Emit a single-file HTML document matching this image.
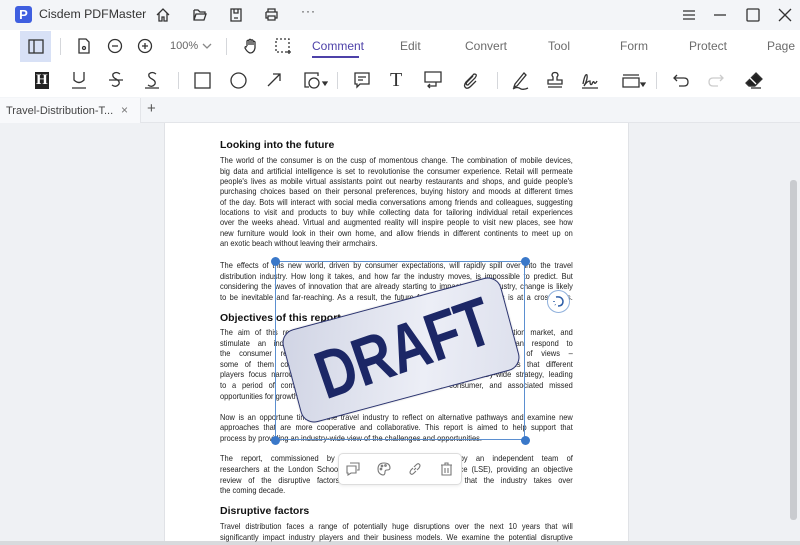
<!DOCTYPE html>
<html><head><meta charset="utf-8"><style>
*{margin:0;padding:0;box-sizing:border-box}
body{width:800px;height:545px;overflow:hidden;background:#eff1f4;font-family:"Liberation Sans",sans-serif;position:relative}
.a{position:absolute}
svg.i{position:absolute;fill:none;stroke:#333;stroke-width:1.3}
.tab{position:absolute;top:39px;font-size:12px;color:#6b6b6b}
.ln{position:absolute;left:220px;width:392px;font-size:8.3px;color:#222;white-space:nowrap;text-align:justify;text-align-last:justify;line-height:10px;height:10px;transform:scaleX(0.9);transform-origin:0 0}
.ln.l{text-align-last:left}
.h{position:absolute;left:220px;font-size:10.5px;font-weight:bold;color:#111}
.sep{position:absolute;width:1px;background:#d5d7db}
.hd{position:absolute;width:9px;height:9px;border-radius:50%;background:#3a78c9}
</style></head><body>
<div class="a" style="left:0;top:0;width:800px;height:30px;background:#f3f5f8"></div>
<div class="a" style="left:15px;top:6px;width:17px;height:17px;border-radius:3px;background:#3f5fe0;color:#fff;font-weight:bold;font-size:13px;text-align:center;line-height:17px">P</div>
<div class="a" style="left:39px;top:7px;font-size:12.3px;color:#333">Cisdem PDFMaster</div>
<svg class="i" style="left:155px;top:7px" width="16" height="16"><path d="M2 8 L8 2 L14 8 M4 6 V14 H7 V10 H9 V14 H12 V6"/></svg>
<svg class="i" style="left:192px;top:8px" width="16" height="14"><path d="M2 2 H6 L8 4 H13 V6 M2 2 V12 H12 L14 6 H4 L2 12"/></svg>
<svg class="i" style="left:229px;top:7px" width="14" height="16"><path d="M2 2 H12 V14 H2 Z M5 2 V6 H9 V2 M5 11 H9"/></svg>
<svg class="i" style="left:264px;top:7px" width="15" height="15"><path d="M4 5 V2 H11 V5 M2 5 H13 V11 H11 M4 11 H2 V5 M4 9 H11 V13 H4 Z"/></svg>
<div class="a" style="left:301px;top:4px;font-size:12px;color:#333;letter-spacing:1px">···</div>
<svg class="i" style="left:682px;top:8px" width="14" height="14"><path d="M1 3 H13 M1 7 H13 M1 11 H13"/></svg>
<svg class="i" style="left:713px;top:8px" width="14" height="14"><path d="M1 7 H13"/></svg>
<svg class="i" style="left:746px;top:8px" width="14" height="14"><rect x="1" y="1" width="12" height="12" rx="1"/></svg>
<svg class="i" style="left:778px;top:8px" width="14" height="14"><path d="M1 1 L13 13 M13 1 L1 13"/></svg>
<div class="a" style="left:0;top:30px;width:800px;height:67px;background:#fff"></div>
<div class="a" style="left:20px;top:31px;width:31px;height:31px;background:#d8e1f6"></div>
<svg class="i" style="left:28px;top:39px" width="16" height="15"><rect x="1" y="1" width="14" height="13"/><path d="M6 1 V14"/></svg>
<div class="sep" style="left:60px;top:38px;height:17px"></div>
<svg class="i" style="left:78px;top:38px" width="12" height="16"><path d="M1 1 H8 L11 4 V15 H1 Z"/><circle cx="6" cy="10" r="1.5"/></svg>
<svg class="i" style="left:107px;top:38px" width="16" height="16"><circle cx="8" cy="8" r="6.5"/><path d="M5 8 H11"/></svg>
<svg class="i" style="left:137px;top:38px" width="16" height="16"><circle cx="8" cy="8" r="6.5"/><path d="M5 8 H11 M8 5 V11"/></svg>
<div class="a" style="left:170px;top:40px;font-size:11px;color:#666">100%</div>
<svg class="i" style="left:202px;top:42px;stroke:#888" width="10" height="8"><path d="M1 2 L5 6 L9 2"/></svg>
<div class="sep" style="left:226px;top:38px;height:17px"></div>
<svg class="i" style="left:243px;top:37px" width="17" height="18"><path d="M4 9 V4 Q5 2.5 6 4 V8 V3 Q7 1.5 8 3 V8 V3.5 Q9 2 10 3.5 V8 V5 Q11 3.5 12 5 V11 Q11 16 7 16 Q4 15 2 11 Q2 9 4 10"/></svg>
<svg class="i" style="left:275px;top:38px" width="17" height="17"><rect x="1" y="1" width="13" height="13" stroke-dasharray="2 2"/><path d="M14 12 V16 M12 14 H16"/></svg>
<div class="tab" style="left:312px;color:#4d41a8">Comment</div>
<div class="a" style="left:312px;top:56px;width:47px;height:2px;background:#4d41a8"></div>
<div class="tab" style="left:400px">Edit</div>
<div class="tab" style="left:465px">Convert</div>
<div class="tab" style="left:548px">Tool</div>
<div class="tab" style="left:620px">Form</div>
<div class="tab" style="left:689px">Protect</div>
<div class="tab" style="left:767px">Page</div>
<div class="a" style="left:35px;top:72px;width:14px;height:17px;background:#222"></div>
<div class="a" style="left:36px;top:72px;font-size:15px;font-weight:bold;color:#fff;font-family:'Liberation Serif',serif">H</div>
<svg class="i" style="left:71px;top:71px" width="16" height="19"><path d="M3 1 V9 Q8 14 13 9 V1 M1 17 H15"/></svg>
<svg class="i" style="left:108px;top:71px" width="16" height="19"><path d="M12 3 Q8 0 5 3 Q4 6 8 8 Q12 10 11 13 Q8 17 4 14 M1 9 H15"/></svg>
<svg class="i" style="left:144px;top:71px" width="16" height="19"><path d="M12 3 Q8 0 5 3 Q4 6 8 8 Q12 10 11 13 Q8 17 4 14 M1 17 H15"/></svg>
<div class="sep" style="left:178px;top:72px;height:17px"></div>
<svg class="i" style="left:194px;top:72px" width="17" height="17"><rect x="1" y="1" width="15" height="15"/></svg>
<svg class="i" style="left:230px;top:72px" width="17" height="17"><circle cx="8.5" cy="8.5" r="7.5"/></svg>
<svg class="i" style="left:266px;top:72px" width="16" height="16"><path d="M2 14 L14 2 M7 2 H14 V9"/></svg>
<svg class="i" style="left:304px;top:72px" width="24" height="17"><path d="M14 4 V1 H1 V15 H5"/><circle cx="10" cy="11" r="5"/><path d="M19 10 H23 L21 13 Z" fill="#333"/></svg>
<div class="sep" style="left:337px;top:72px;height:17px"></div>
<svg class="i" style="left:354px;top:72px" width="17" height="17"><path d="M1 1 H15 V12 H6 L3 15 V12 H1 Z M4 5 H12 M4 8 H9"/></svg>
<div class="a" style="left:390px;top:69px;font-size:20px;color:#333;font-family:'Liberation Serif',serif">T</div>
<svg class="i" style="left:424px;top:71px" width="19" height="18"><path d="M1 1 H17 V11 H1 Z M10 15 H4 M6 13 L4 15 L6 17 M12 11 V15 H10"/></svg>
<svg class="i" style="left:462px;top:72px" width="17" height="17"><path d="M11 4 L5 10 Q3 13 6 13 L13 6 Q16 2 12 2 L4 10 Q1 14 4 16 Q6 17 9 14 L14 9"/></svg>
<div class="sep" style="left:497px;top:72px;height:17px"></div>
<svg class="i" style="left:511px;top:71px" width="19" height="19"><path d="M4 13 L13 2 L15 4 L6 15 L3 16 Z M2 18 Q6 15 10 18 Q13 19 17 17"/></svg>
<svg class="i" style="left:546px;top:71px" width="18" height="19"><path d="M7 9 V6 Q5 4 7 2 Q9 1 11 2 Q13 4 11 6 V9 H16 V13 H2 V9 Z M2 16 H16"/></svg>
<svg class="i" style="left:581px;top:71px" width="19" height="19"><path d="M2 13 Q4 2 6 4 Q7 8 3 15 Q6 10 9 10 Q9 15 11 13 Q12 10 13 11 Q14 14 16 10 M1 17 H17"/></svg>
<svg class="i" style="left:622px;top:72px" width="24" height="17"><path d="M1 3 H17 M1 6 H17 V15 H1 Z"/><path d="M19 11 H23 L21 14 Z" fill="#333"/></svg>
<div class="sep" style="left:656px;top:72px;height:17px"></div>
<svg class="i" style="left:672px;top:73px" width="18" height="15"><path d="M5 2 L2 5 L5 8 M2 5 H12 Q16 5 16 9 Q16 13 12 13 H7"/></svg>
<svg class="i" style="left:707px;top:73px;stroke:#ccc" width="18" height="15"><path d="M13 2 L16 5 L13 8 M16 5 H6 Q2 5 2 9 Q2 13 6 13 H11"/></svg>
<svg class="i" style="left:745px;top:71px" width="19" height="18"><path d="M11 2 L17 8 L10 15 L4 15 L1 12 Z" fill="#222"/><path d="M5 7 L11 13" stroke="#fff"/><path d="M1 12 L4 15 H10" stroke="#333"/><path d="M6 17 H16"/></svg>
<div class="a" style="left:0;top:97px;width:800px;height:26px;background:#f3f5f8;border-bottom:1px solid #e3e5e9"></div>
<div class="a" style="left:0;top:98px;width:141px;height:25px;background:#f8f9fb;border-right:1px solid #e3e5e9"></div>
<div class="a" style="left:6px;top:105px;font-size:11px;color:#444">Travel-Distribution-T...</div>
<div class="a" style="left:121px;top:103px;font-size:12px;color:#777">×</div>
<div class="a" style="left:147px;top:100px;font-size:15px;color:#555">+</div>
<div class="a" style="left:164px;top:123px;width:465px;height:418px;background:#fff;border-left:1px solid #e0e2e6;border-right:1px solid #e0e2e6"></div>
<div class="a" style="left:0;top:541px;width:800px;height:4px;background:#d8dadd"></div>
<div class="a" style="left:790px;top:180px;width:7px;height:340px;border-radius:3px;background:#c9cbcf"></div>

<div class="h" style="top:139px">Looking into the future</div>
<div class="ln" style="top:155px">The world of the consumer is on the cusp of momentous change. The combination of mobile devices,</div>
<div class="ln" style="top:165.5px">big data and artificial intelligence is set to revolutionise the consumer experience. Retail will permeate</div>
<div class="ln" style="top:176px">people's lives as mobile virtual assistants point out nearby restaurants and shops, and guide people's</div>
<div class="ln" style="top:186px">purchasing choices based on their personal preferences, buying history and moods at different times</div>
<div class="ln" style="top:196.5px">of the day. Bots will interact with social media conversations among friends and colleagues, suggesting</div>
<div class="ln" style="top:207px">locations to visit and products to buy while collecting data for tailoring individual retail experiences</div>
<div class="ln" style="top:217px">over the weeks ahead. Virtual and augmented reality will inspire people to visit new places, see how</div>
<div class="ln" style="top:227.5px">new furniture would look in their own home, and allow friends in different continents to meet up on</div>
<div class="ln l" style="top:238px">an exotic beach without leaving their armchairs.</div>

<div class="ln" style="top:260px">The effects of this new world, driven by consumer expectations, will rapidly spill over into the travel</div>
<div class="ln" style="top:270.5px">distribution industry. How long it takes, and how far the industry moves, is impossible to predict. But</div>
<div class="ln" style="top:281px">considering the waves of innovation that are already starting to impact on the industry, change is likely</div>
<div class="ln" style="top:291.5px">to be inevitable and far-reaching. As a result, the future for many industry players is at a crossroads.</div>

<div class="h" style="top:312px">Objectives of this report</div>
<div class="ln" style="top:327px">The aim of this report is to examine the disruptive forces in the travel distribution market, and</div>
<div class="ln" style="top:337.5px">stimulate an industry-wide debate about the new business models that can respond to</div>
<div class="ln" style="top:348px">the consumer revolution. Contributors to this report have a wide range of views –</div>
<div class="ln" style="top:358.5px">some of them conflicting – about how the industry will respond. The risk is that different</div>
<div class="ln" style="top:369px">players focus narrowly on their own piece of the chain without an industry-wide strategy, leading</div>
<div class="ln" style="top:380px">to a period of competitive disruption and confusion for the consumer, and associated missed</div>
<div class="ln l" style="top:390.5px">opportunities for growth.</div>

<div class="ln" style="top:411.5px">Now is an opportune time for the travel industry to reflect on alternative pathways and examine new</div>
<div class="ln" style="top:422px">approaches that are more cooperative and collaborative. This report is aimed to help support that</div>
<div class="ln l" style="top:432.5px">process by providing an industry-wide view of the challenges and opportunities.</div>

<div class="ln" style="top:453px">The report, commissioned by Amadeus, has been written by an independent team of</div>
<div class="ln" style="top:464px">researchers at the London School of Economics and Political Science (LSE), providing an objective</div>
<div class="ln" style="top:474.5px">review of the disruptive factors that will shape the pathways that the industry takes over</div>
<div class="ln l" style="top:485px">the coming decade.</div>

<div class="h" style="top:505px">Disruptive factors</div>
<div class="ln" style="top:521px">Travel distribution faces a range of potentially huge disruptions over the next 10 years that will</div>
<div class="ln" style="top:531.5px">significantly impact industry players and their business models. We examine the potential disruptive</div>

<div class="a" style="left:275px;top:261px;width:250px;height:179px;border:1px solid #5b8fd0"></div>
<div class="hd" style="left:271px;top:257px"></div>
<div class="hd" style="left:521px;top:257px"></div>
<div class="hd" style="left:271px;top:436px"></div>
<div class="hd" style="left:521px;top:436px"></div>
<div class="a" style="left:547px;top:290px;width:23px;height:23px;border-radius:50%;border:1px solid #8fb0dc;background:#fff"></div>
<svg class="i" style="left:552px;top:295px;stroke:#2f5fa8;stroke-width:1.5" width="13" height="13"><path d="M4 2 Q10 1 11 6 Q11 11 6 11" /><path d="M2 6 V7 M3 9.5 L3.5 10" stroke-dasharray="1 2"/></svg>
<div class="a" style="left:288px;top:302px;width:226px;height:96px;border-radius:14px;border:1.5px solid #2b3470;background:linear-gradient(110deg,#d0d4e4,#eceef6 60%,#dde0ed);transform:rotate(-15deg);box-shadow:0 0 2px rgba(0,0,0,.2)"></div>
<div class="a" style="left:291px;top:303px;width:222px;height:93px;transform:rotate(-19deg);text-align:center;font-size:68px;line-height:93px;font-weight:bold;color:#1c2766;letter-spacing:-1px"><span style="display:inline-block;transform:scaleX(0.8)">DRAFT</span></div>
<div class="a" style="left:338px;top:453px;width:124px;height:32px;background:#fff;border:1px solid #ddd;border-radius:5px;box-shadow:0 1px 3px rgba(0,0,0,.08)"></div>
<svg class="i" style="left:346px;top:462px;stroke:#777;stroke-width:1.1" width="14" height="14"><path d="M4 1 H13 V8 H11 M1 4 H10 V11 H5 L2 13 V11 H1 Z"/></svg>
<svg class="i" style="left:377px;top:462px;stroke:#777;stroke-width:1.1" width="14" height="14"><path d="M7 1 Q13 1 13 6 Q13 8 10 8 Q8 8 8 10 Q8 13 6 13 Q1 12 1 7 Q1 1 7 1 Z"/><circle cx="4" cy="7" r=".8"/><circle cx="5" cy="4" r=".8"/><circle cx="8.5" cy="3.5" r=".8"/></svg>
<svg class="i" style="left:408px;top:462px;stroke:#777;stroke-width:1.1" width="14" height="14"><path d="M6 8 L8 6 M5 6 L3 8 Q1 11 3 12 Q4 13 6 11 L8 9 M9 8 L11 6 Q13 3 11 2 Q10 1 8 3 L6 5"/></svg>
<svg class="i" style="left:440px;top:462px;stroke:#777;stroke-width:1.1" width="13" height="14"><path d="M1 3 H12 M5 3 V1 H8 V3 M2 3 V13 H11 V3 M5 6 V11 M8 6 V11"/></svg>
</body></html>
